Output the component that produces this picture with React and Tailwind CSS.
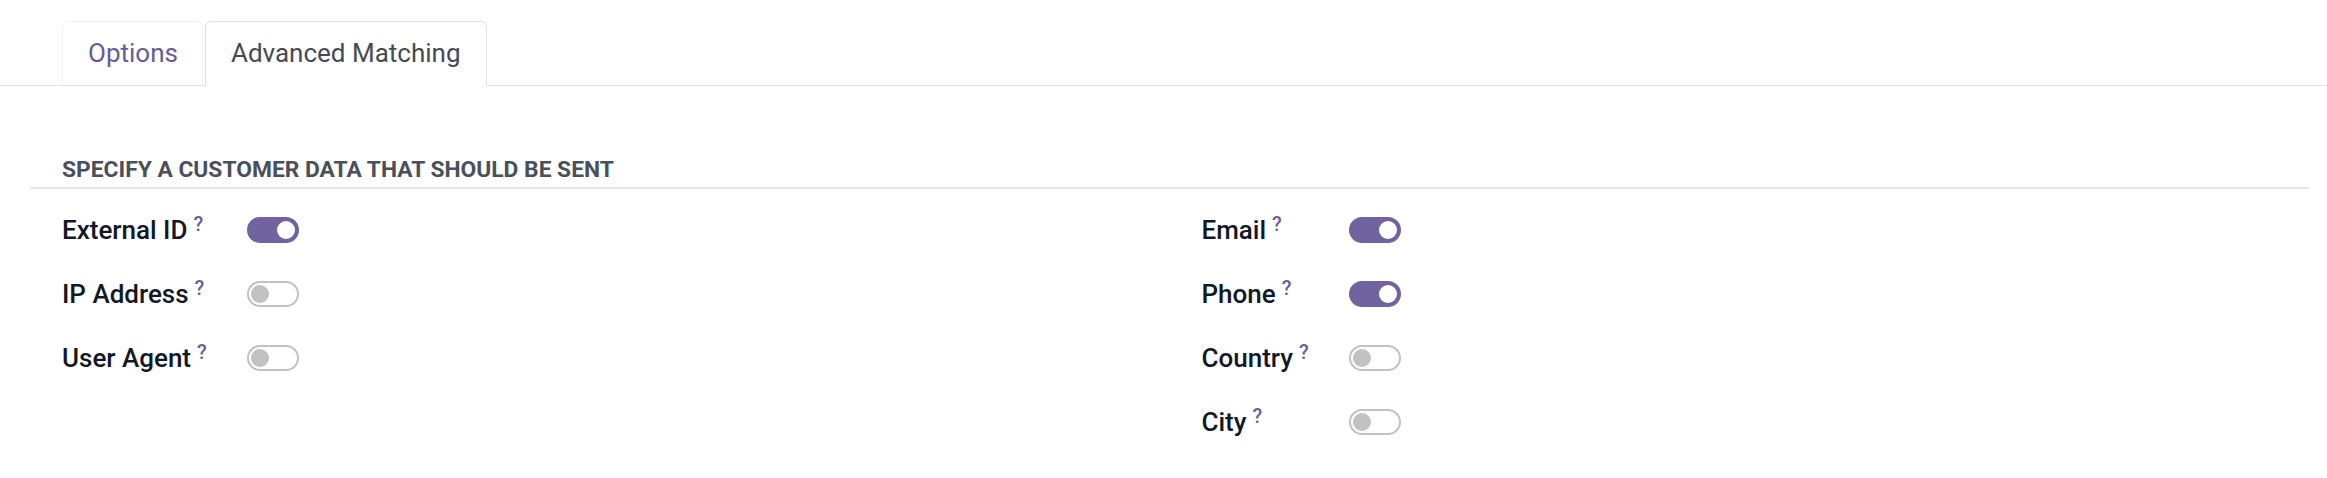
import React from "react";

function Toggle({ on }) {
    return on ? (
        <span className="inline-flex items-center justify-end w-[52px] h-[26px] rounded-full bg-[#71639e] border-2 border-[#71639e] pr-[2px]">
            <span className="w-[18px] h-[18px] rounded-full bg-white" />
        </span>
    ) : (
        <span className="inline-flex items-center justify-start w-[52px] h-[26px] rounded-full bg-white border-2 border-[#c2c2c2] pl-[2px]">
            <span className="w-[18px] h-[18px] rounded-full bg-[#c2c2c2]" />
        </span>
    );
}

function FieldGroup({ fields }) {
    return (
        <div className="grid grid-cols-[auto_1fr] content-start pl-8">
            {fields.map((field, index) => (
                <React.Fragment key={index}>
                    <div className="flex items-start py-3 pr-[40px] leading-[40px]">
                        <span className="font-medium text-[#111827]">{field.label}</span>
                        <sup className="ml-[6px] text-[20px] leading-none mt-[4px] top-0 font-medium text-[#6b5d99]">?</sup>
                    </div>
                    <div className="flex items-center py-3">
                        <Toggle on={field.on} />
                    </div>
                </React.Fragment>
            ))}
        </div>
    );
}

export default function App() {
    const left = [
        { label: "External ID", on: true },
        { label: "IP Address", on: false },
        { label: "User Agent", on: false },
    ];
    const right = [
        { label: "Email", on: true },
        { label: "Phone", on: true },
        { label: "Country", on: false },
        { label: "City", on: false },
    ];

    return (
        <div className="w-[2327px] h-[478px] bg-white text-[26px] font-['Roboto',sans-serif]">
            <div className="flex gap-[2px] pt-[21px] pl-[62px] border-b border-[#dee2e6]">
                <div className="-mb-px pl-[25px] pr-[24px] py-[12px] leading-[39px] border border-b-0 border-[#f1f2f4] rounded-t-[6px] text-[#665c94]">
                    Options
                </div>
                <div className="-mb-px px-[25px] py-[12px] leading-[39px] border border-[#dee2e6] border-b-white rounded-t-[6px] bg-white text-[#444b55]">
                    Advanced Matching
                </div>
            </div>

            <div className="ml-[30px] mr-[18px] mt-[67px]">
                <div className="pl-8 border-b-2 border-[#e6e6e6] text-[22.8px] leading-[34px] font-bold uppercase text-[#4a5059]">
                    Specify a customer data that should be sent
                </div>
                <div className="grid grid-cols-2 items-start mt-[9px]">
                    <FieldGroup fields={left} />
                    <FieldGroup fields={right} />
                </div>
            </div>
        </div>
    );
}
